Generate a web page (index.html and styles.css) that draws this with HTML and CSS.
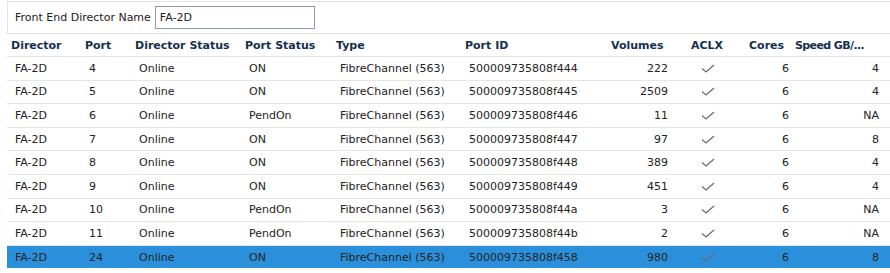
FILE: index.html
```html
<!DOCTYPE html>
<html>
<head>
<meta charset="utf-8">
<link rel="stylesheet" href="styles.css">
</head>
<body>
<div class="page">
  <div class="filter">
    <label class="filter-label">Front End Director Name</label>
    <input class="filter-input" type="text" value="FA-2D">
  </div>
  <table class="grid">
    <colgroup>
      <col class="c-dir"><col class="c-port"><col class="c-dstat"><col class="c-pstat"><col class="c-type"><col class="c-pid"><col class="c-vol"><col class="c-aclx"><col class="c-cores"><col class="c-speed">
    </colgroup>
    <thead>
      <tr>
        <th>Director</th><th>Port</th><th>Director Status</th><th>Port Status</th><th>Type</th><th>Port ID</th><th>Volumes</th><th>ACLX</th><th>Cores</th><th class="h-speed">Speed GB/...</th>
      </tr>
    </thead>
    <tbody>
      <tr><td>FA-2D</td><td>4</td><td>Online</td><td>ON</td><td>FibreChannel (563)</td><td>500009735808f444</td><td class="num vol">222</td><td class="chk"><svg viewBox="0 0 14 9"><polyline points="1,4.5 5,8 13,1"/></svg></td><td class="num cores">6</td><td class="num speed">4</td></tr>
      <tr><td>FA-2D</td><td>5</td><td>Online</td><td>ON</td><td>FibreChannel (563)</td><td>500009735808f445</td><td class="num vol">2509</td><td class="chk"><svg viewBox="0 0 14 9"><polyline points="1,4.5 5,8 13,1"/></svg></td><td class="num cores">6</td><td class="num speed">4</td></tr>
      <tr><td>FA-2D</td><td>6</td><td>Online</td><td>PendOn</td><td>FibreChannel (563)</td><td>500009735808f446</td><td class="num vol">11</td><td class="chk"><svg viewBox="0 0 14 9"><polyline points="1,4.5 5,8 13,1"/></svg></td><td class="num cores">6</td><td class="num speed">NA</td></tr>
      <tr><td>FA-2D</td><td>7</td><td>Online</td><td>ON</td><td>FibreChannel (563)</td><td>500009735808f447</td><td class="num vol">97</td><td class="chk"><svg viewBox="0 0 14 9"><polyline points="1,4.5 5,8 13,1"/></svg></td><td class="num cores">6</td><td class="num speed">8</td></tr>
      <tr><td>FA-2D</td><td>8</td><td>Online</td><td>ON</td><td>FibreChannel (563)</td><td>500009735808f448</td><td class="num vol">389</td><td class="chk"><svg viewBox="0 0 14 9"><polyline points="1,4.5 5,8 13,1"/></svg></td><td class="num cores">6</td><td class="num speed">4</td></tr>
      <tr><td>FA-2D</td><td>9</td><td>Online</td><td>ON</td><td>FibreChannel (563)</td><td>500009735808f449</td><td class="num vol">451</td><td class="chk"><svg viewBox="0 0 14 9"><polyline points="1,4.5 5,8 13,1"/></svg></td><td class="num cores">6</td><td class="num speed">4</td></tr>
      <tr><td>FA-2D</td><td>10</td><td>Online</td><td>PendOn</td><td>FibreChannel (563)</td><td>500009735808f44a</td><td class="num vol">3</td><td class="chk"><svg viewBox="0 0 14 9"><polyline points="1,4.5 5,8 13,1"/></svg></td><td class="num cores">6</td><td class="num speed">NA</td></tr>
      <tr><td>FA-2D</td><td>11</td><td>Online</td><td>PendOn</td><td>FibreChannel (563)</td><td>500009735808f44b</td><td class="num vol">2</td><td class="chk"><svg viewBox="0 0 14 9"><polyline points="1,4.5 5,8 13,1"/></svg></td><td class="num cores">6</td><td class="num speed">NA</td></tr>
      <tr class="selected"><td>FA-2D</td><td>24</td><td>Online</td><td>ON</td><td>FibreChannel (563)</td><td>500009735808f458</td><td class="num vol">980</td><td class="chk"><svg viewBox="0 0 14 9"><polyline points="1,4.5 5,8 13,1"/></svg></td><td class="num cores">6</td><td class="num speed">8</td></tr>
    </tbody>
  </table>
</div>
</body>
</html>
```
FILE: styles.css
```css
html, body {
  margin: 0;
  padding: 0;
  background: #ffffff;
}
body {
  font-family: "DejaVu Sans", Verdana, sans-serif;
  font-size: 11px;
  color: #222222;
}
.page {
  padding: 1px 0 0 7px;
  width: 900px;
}
.filter {
  display: flex;
  align-items: center;
  height: 31px;
  border: 1px solid #e3e3e3;
  border-right: none;
  padding-left: 7px;
  box-sizing: content-box;
}
.filter-label {
  color: #222222;
  margin-right: 4px;
}
.filter-input {
  width: 160px;
  height: 23px;
  box-sizing: border-box;
  border: 1px solid #7f9db9;
  padding: 0 0 0 4px;
  margin: 0;
  font-family: "DejaVu Sans", Verdana, sans-serif;
  font-size: 11px;
  color: #222222;
  outline: none;
}
.grid {
  border-collapse: collapse;
  table-layout: fixed;
  width: 893px;
}
.c-dir { width: 74px; }
.c-port { width: 50px; }
.c-dstat { width: 110px; }
.c-pstat { width: 91px; }
.c-type { width: 129px; }
.c-pid { width: 146px; }
.c-vol { width: 80px; }
.c-aclx { width: 58px; }
.c-cores { width: 46px; }
.c-speed { width: 109px; }
.grid th {
  height: 22px;
  padding: 0 0 0 4px;
  text-align: left;
  font-weight: bold;
  color: #14304d;
  white-space: nowrap;
  overflow: hidden;
  border-bottom: 1px solid #e3e3e3;
}
.grid th.h-speed {
  letter-spacing: -0.6px;
}
.grid td {
  height: 22.6px;
  padding: 0 0 0 8px;
  white-space: nowrap;
  border-bottom: 1px solid #e6e6e6;
}
.grid td.num {
  text-align: right;
  padding-left: 0;
}
.grid td.vol { padding-right: 19px; }
.grid td.cores { padding-right: 2px; }
.grid td.speed { padding-right: 21px; }
.grid td.chk {
  padding-left: 14px;
  line-height: 0;
}
.chk svg {
  width: 14px;
  height: 9px;
  fill: none;
  stroke: #6a6a6a;
  stroke-width: 1.2;
}
.grid tr.selected td {
  background: #2b90db;
  border-bottom: none;
}
```
